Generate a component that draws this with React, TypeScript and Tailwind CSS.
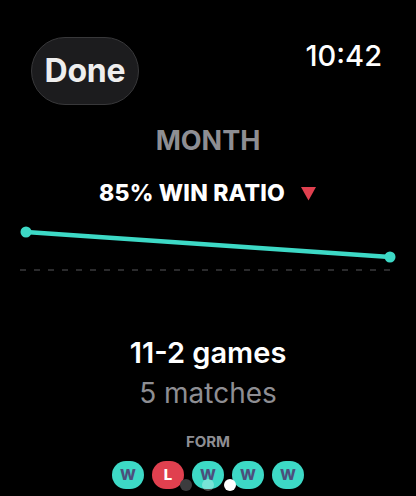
const form = ["W", "L", "W", "W", "W"];

function TrendChart() {
  return (
    <svg width="416" height="60" viewBox="0 0 416 60" className="block">
      <line x1="20" y1="50" x2="392" y2="50" stroke="#3a3a3c" strokeWidth="1.5" strokeDasharray="6 8" />
      <line x1="26" y1="12" x2="390" y2="37" stroke="#3dd9c6" strokeWidth="4.5" strokeLinecap="round" />
      <circle cx="26" cy="12" r="5.5" fill="#3dd9c6" />
      <circle cx="390" cy="37" r="5.5" fill="#3dd9c6" />
    </svg>
  );
}

export default function App() {
  return (
    <div
      className="w-[416px] h-[496px] overflow-hidden bg-black text-white flex flex-col"
      style={{ fontFamily: "Inter, 'Noto Sans', sans-serif" }}
    >
      <div className="flex items-start justify-between pl-[31px] pr-[34px] pt-[37px]">
        <button className="w-[108px] h-[68px] rounded-full bg-[#1c1c1e] border border-[#38383a] flex items-center justify-center text-[32px] font-bold text-[#eeeeee] tracking-[-0.2px]">
          Done
        </button>
        <span className="text-[29px] font-medium leading-none mt-[4px]">10:42</span>
      </div>

      <div className="flex flex-col items-center mt-[20px]">
        <span className="text-[27px] font-bold leading-[32px] text-[#8e8e93]">MONTH</span>
        <div className="flex items-center gap-[15px] mt-[22px]">
          <span className="text-[23px] font-extrabold leading-[28px] tracking-[0.2px]">85% WIN RATIO</span>
          <svg width="17" height="15" viewBox="0 0 17 15">
            <path d="M1 1 L16 1 L8.5 14.5 Z" fill="#e0404f" />
          </svg>
        </div>
      </div>

      <div className="mt-[13px]">
        <TrendChart />
      </div>

      <div className="flex flex-col items-center mt-[55px]">
        <span className="text-[29px] font-semibold leading-[36px]">11-2 games</span>
        <span className="text-[28px] leading-[36px] text-[#8e8e93] mt-[4px]">5 matches</span>
        <span className="text-[15px] font-bold leading-[18px] text-[#8e8e93] mt-[22px]">FORM</span>
        <div className="relative mt-[10px]">
          <div className="flex gap-[8px]">
            {form.map((r, i) => (
              <div
                key={i}
                className={
                  r === "W"
                    ? "w-[32px] h-[28px] rounded-full bg-[#3dd9c6] flex items-center justify-center text-[15px] font-extrabold text-[#4b4f7c]"
                    : "w-[32px] h-[28px] rounded-full bg-[#e0404f] flex items-center justify-center text-[15px] font-extrabold text-white"
                }
              >
                {r}
              </div>
            ))}
          </div>
          <div className="absolute left-[68px] top-[18px] flex gap-[10px]">
            <span className="w-[12px] h-[12px] rounded-full bg-[#3c3c3e]" />
            <span className="w-[12px] h-[12px] rounded-full bg-white/30" />
            <span className="w-[12px] h-[12px] rounded-full bg-white" />
          </div>
        </div>
      </div>
    </div>
  );
}
